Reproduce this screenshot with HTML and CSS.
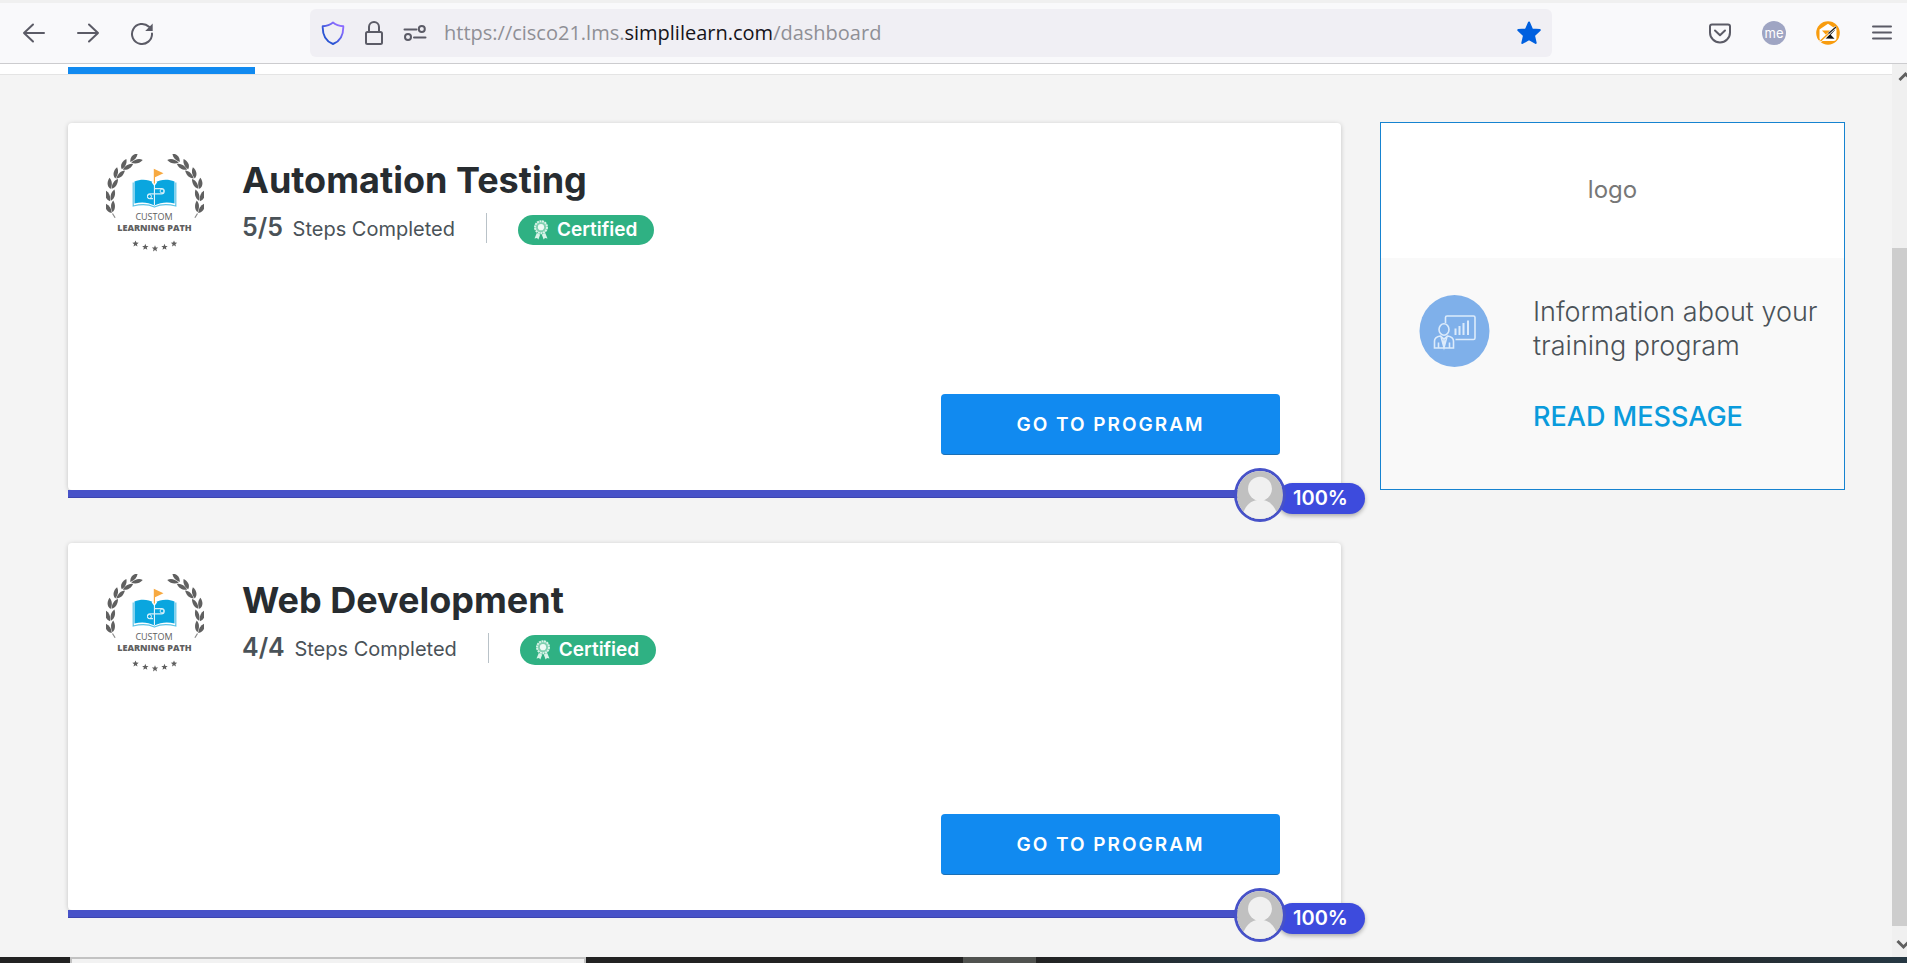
FILE: index.html
```html
<!DOCTYPE html>
<html lang="en">
<head>
<meta charset="utf-8">
<title>Dashboard</title>
<meta name="viewport" content="width=device-width, initial-scale=1">
<link rel="stylesheet" href="styles.css">
</head>
<body>
<svg class="defs" width="0" height="0" aria-hidden="true">
  <defs>
    <g id="leaf">
      <path d="M-.4 5.800C-5.200 3.800-5.600-1-4-5-.8-2.600.6 1 -.4 5.800Z"/>
      <path d="M.5 5.300C-.4.4 1-3.800 4.400-5.800 5.600-1.400 4.400 3.200 .5 5.300Z"/>
    </g>
    <g id="branch">
      <use href="#leaf" transform="translate(29.500 5.300) rotate(58)"/>
      <use href="#leaf" transform="translate(20 11.300) rotate(42)"/>
      <use href="#leaf" transform="translate(12.300 19.500) rotate(28)"/>
      <use href="#leaf" transform="translate(6.300 29.500) rotate(14)"/>
      <use href="#leaf" transform="translate(4.300 41.500) rotate(-2)"/>
      <use href="#leaf" transform="translate(4.600 53.300) rotate(-16)"/>
      <path d="M6.500 59.500l2.600 4.200" stroke="#8a8a8a" stroke-width="1.200"/>
    </g>
    <path id="star" d="M0-3.300L.9-1.100 3.200-1 1.400.5 2 2.800 0 1.500-2 2.800-1.400.5-3.200-1-.9-1.100Z"/>
    <symbol id="path-badge" viewBox="0 0 98 98">
      <g fill="#606060">
        <use href="#branch"/>
        <use href="#branch" transform="translate(98 0) scale(-1 1)"/>
        <use href="#star" x="29.500" y="89.700"/>
        <use href="#star" x="39.300" y="93"/>
        <use href="#star" x="49" y="94.600"/>
        <use href="#star" x="58.500" y="93"/>
        <use href="#star" x="68" y="89.700"/>
      </g>
      <path d="M28.500 27.500C35 24.700 42 25 48.400 28.800 55 25 62 24.700 68.500 27.500V49.500C62 47.700 55 48 48.400 51.500 42 48 35 47.700 28.500 49.500Z" fill="#0aa6df"/>
      <path d="M27.200 28.500V52C35 50 42 50 48.400 53 55 50 62 50 69.800 52V28.500" fill="none" stroke="#5cc4e8" stroke-width="1.200"/>
      <path d="M48.400 29V51" stroke="#fff" stroke-width="1"/>
      <path d="M48.400 34.600H55.500A2 2 0 0 1 55.500 39.800H44A2.300 2.300 0 0 0 44 44.600H47" fill="none" stroke="#d5f0fa" stroke-width="1.300"/>
      <circle cx="56" cy="37" r="1.900" fill="#0aa6df" stroke="#fff" stroke-width=".8"/>
      <circle cx="43.500" cy="42.500" r="2" fill="#0aa6df" stroke="#fff" stroke-width=".8"/>
      <path d="M45.700 28.500l2.700 3.500 2.700-3.500-1.200-1.200h-3Z" fill="#fff"/>
      <path d="M47.800 14.800L57.500 19.300 49 23.200V29.500H47.800Z" fill="#f7a940"/>
      <text class="badge-text" x="48" y="65.500" text-anchor="middle">CUSTOM</text>
      <text class="badge-text badge-text--bold" x="48.500" y="76.700" text-anchor="middle">LEARNING PATH</text>
    </symbol>
    <symbol id="ribbon" viewBox="0 0 16 20">
      <path d="M3.800 13L1.500 18.600 4 18 5.400 19.600 7.200 14.600ZM12.200 13L14.500 18.600 12 18 10.600 19.600 8.800 14.600Z" fill="#d8f3e8"/>
      <circle cx="8" cy="7.200" r="6" fill="#7fd0b0" stroke="#d8f3e8" stroke-width="2" stroke-dasharray="2 .6"/>
      <circle cx="8" cy="7.200" r="3.100" fill="#eefaf5"/>
    </symbol>
    <symbol id="person" viewBox="0 0 48 50">
      <path fill="#c0c0c0" d="M0 0H48V50H0Z"/>
      <circle cx="24" cy="18.500" r="12.500" fill="#f0f0f0"/>
      <path d="M5 50C7 37 14 30 24 30S41 37 43 50Z" fill="#f0f0f0"/>
    </symbol>
  </defs>
</svg>

<header class="toolbar">
  <div class="toolbar__group">
    <button class="icon-button" aria-label="Back"><svg viewBox="0 0 24 24"><path d="M22 12H2M11 3.500L2 12l9 8.500" class="line"/></svg></button>
    <button class="icon-button" aria-label="Forward"><svg viewBox="0 0 24 24"><path d="M2 12H22M13 3.500L22 12l-9 8.500" class="line"/></svg></button>
    <button class="icon-button" aria-label="Reload"><svg viewBox="0 0 24 24"><path d="M22 12.500A10 10 0 1 1 19 5.800" class="line"/><path d="M22.700 2.500V10H15.200Z" fill="#5b5b66"/></svg></button>
  </div>
  <div class="address">
    <button class="icon-button" aria-label="Tracking protection"><svg viewBox="0 0 24 24"><defs><linearGradient id="shield" x1="0" y1="1" x2="1" y2="0"><stop offset=".3" stop-color="#2b55d3"/><stop offset=".8" stop-color="#8a6cff"/></linearGradient></defs><path d="M12 1.500C15 4 18.500 5 22.300 5.300 22.500 13 20 20 12 23 4 20 1.500 13 1.700 5.300 5.500 5 9 4 12 1.500Z" fill="none" stroke="url(#shield)" stroke-width="1.900" stroke-linejoin="round"/></svg></button>
    <button class="icon-button" aria-label="Site security"><svg viewBox="0 0 24 24"><path d="M4 12.500q0-1.500 1.500-1.500h13q1.500 0 1.500 1.500v9q0 1.500-1.500 1.500h-13q-1.500 0-1.500-1.500ZM7 11V6a5 5 0 0 1 10 0v5" class="line"/></svg></button>
    <button class="icon-button" aria-label="Site permissions"><svg viewBox="0 0 24 24"><path d="M1.500 8.500H13.500M11 16.500H22.500" class="line"/><circle cx="18.800" cy="8" r="3" class="line"/><circle cx="5" cy="16" r="3" class="line"/></svg></button>
    <div class="address__url" role="textbox" aria-label="Address">https://cisco21.lms.<span class="address__domain">simplilearn.com</span>/dashboard</div>
    <button class="icon-button" aria-label="Bookmark this page"><svg viewBox="0 0 24 24"><path d="M12 1.500L15 8.400 22.800 9.100 17 14.500 18.700 22 12 18.200 5.300 22 7 14.500 1.200 9.100 9 8.400Z" fill="#0060df" stroke="#0060df" stroke-width="2" stroke-linejoin="round"/></svg></button>
  </div>
  <div class="toolbar__group">
    <button class="icon-button" aria-label="Save to Pocket"><svg viewBox="0 0 24 24"><path d="M4 3.500H20q2 0 2 2V11.500A10 10 0 0 1 2 11.500V5.500q0-2 2-2ZM7 9.500l5 4.700 5-4.700" class="line"/></svg></button>
    <button class="icon-button account" aria-label="Account">me</button>
    <button class="icon-button" aria-label="Extension"><svg viewBox="0 0 24 24"><circle cx="12" cy="12" r="11.800" fill="#f89c0e"/><path d="M12 2.800L20.500 8.500V17q0 3-3 3H6.500q-3 0-3-3V8.500Z" fill="#fff"/><path d="M6 9.500h7.500l2 1.500-4 4.500Z" fill="#f89c0e"/><path d="M9.500 17.500l4.500-4.500 4.500 4.800ZM13.500 12.500l5-4.500.5 1-4.500 5Z" fill="#111"/><path d="M4 20.500L20 6" stroke="#fff" stroke-width="2.500"/><path d="M4.500 20L12.500 12.500" stroke="#f89c0e" stroke-width="1.500"/><path d="M12.500 12.500L20 6" stroke="#222" stroke-width="1.300"/></svg></button>
    <button class="icon-button" aria-label="Open menu"><svg viewBox="0 0 24 24"><path d="M3 5.500H21M3 11.500H21M3 17.500H21" class="line"/></svg></button>
  </div>
</header>

<div class="viewport">
  <div class="page">
    <nav class="tabs" aria-label="Sections"><span class="tabs__active"></span></nav>
    <div class="layout">
      <main class="programs">
        <article class="program">
          <div class="program__card">
            <div class="program__head">
              <svg class="program__badge" role="img" aria-label="Custom learning path"><use href="#path-badge"/></svg>
              <div class="program__info">
                <h2 class="program__title">Automation Testing</h2>
                <div class="program__meta">
                  <p class="steps"><strong class="steps__count">5/5</strong> Steps Completed</p>
                  <span class="certified"><svg class="certified__icon" aria-hidden="true"><use href="#ribbon"/></svg>Certified</span>
                </div>
              </div>
            </div>
            <button class="program__go">GO TO PROGRAM</button>
          </div>
          <div class="progress" role="progressbar" aria-label="Automation Testing progress" aria-valuenow="100">
            <div class="progress__marker">
              <svg class="progress__avatar" aria-hidden="true"><use href="#person"/></svg>
              <span class="progress__value">100%</span>
            </div>
          </div>
        </article>
        <article class="program">
          <div class="program__card">
            <div class="program__head">
              <svg class="program__badge" role="img" aria-label="Custom learning path"><use href="#path-badge"/></svg>
              <div class="program__info">
                <h2 class="program__title">Web Development</h2>
                <div class="program__meta">
                  <p class="steps"><strong class="steps__count">4/4</strong> Steps Completed</p>
                  <span class="certified"><svg class="certified__icon" aria-hidden="true"><use href="#ribbon"/></svg>Certified</span>
                </div>
              </div>
            </div>
            <button class="program__go">GO TO PROGRAM</button>
          </div>
          <div class="progress" role="progressbar" aria-label="Web Development progress" aria-valuenow="100">
            <div class="progress__marker">
              <svg class="progress__avatar" aria-hidden="true"><use href="#person"/></svg>
              <span class="progress__value">100%</span>
            </div>
          </div>
        </article>
      </main>
      <aside class="notice">
        <div class="notice__logo">logo</div>
        <div class="notice__body">
          <svg class="notice__icon" viewBox="0 0 70 72" aria-hidden="true">
            <ellipse cx="35" cy="36" rx="35" ry="36" fill="#7fb0ea"/>
            <g fill="none" stroke="#dcebfb" stroke-width="1.600">
              <path d="M26 28V22.500q0-1.500 1.500-1.500H54q1.500 0 1.500 1.500V43q0 1.500-1.500 1.500H36"/>
              <path d="M36 40V33.500M40 40V31M44 40V28M48.500 40V25.500" stroke-width="2"/>
              <ellipse cx="24.500" cy="34.500" rx="5" ry="5.800"/>
              <path d="M15 53V46q0-4 6-5l3.500 3 3.500-3q6 1 6 5v7ZM19 53V47.500M30 53V47.500M21.500 41.500l3 11 3-11M24.500 44v8"/>
            </g>
          </svg>
          <div class="notice__text">
            <p class="notice__message">Information about your training program</p>
            <a class="notice__link" href="#">READ MESSAGE</a>
          </div>
        </div>
      </aside>
    </div>
  </div>
  <div class="scrollbar" aria-hidden="true">
    <svg class="scrollbar__arrow" viewBox="0 0 15 31"><path d="M7.500 16L13.500 10 19.500 16" fill="none" stroke="#606060" stroke-width="3"/></svg>
    <div class="scrollbar__track"><div class="scrollbar__thumb"></div></div>
    <svg class="scrollbar__arrow" viewBox="0 0 15 31"><path d="M5.500 15L11.500 21 17.500 15" fill="none" stroke="#606060" stroke-width="3"/></svg>
  </div>
</div>

<footer class="taskbar">
  <div class="taskbar__search"></div>
  <div class="taskbar__apps"></div>
  <div class="taskbar__current"></div>
  <div class="taskbar__rest"></div>
</footer>
</body>
</html>
```

FILE: styles.css
```css
* {
  box-sizing: border-box;
}

body {
  margin: 0;
  min-height: 100vh;
  display: flex;
  flex-direction: column;
  background: #f4f4f4;
  color: #4a5258;
  font-family: Inter, "Liberation Sans", sans-serif;
  overflow-x: hidden;
}

h2,
p {
  margin: 0;
}

button {
  border: 0;
  padding: 0;
  background: none;
  font-family: inherit;
  cursor: pointer;
}

.defs {
  position: absolute;
}

/* Browser toolbar */
.toolbar {
  display: flex;
  align-items: center;
  gap: 156px;
  padding: 6px 13px 6px 22px;
  border-top: 3px solid #f0f0f0;
  border-bottom: 1px solid #cccccf;
  background: #f9f9fb;
}

.toolbar__group {
  display: flex;
  gap: 30px;
}

.icon-button {
  flex: none;
  width: 24px;
  height: 24px;
}

.icon-button svg {
  display: block;
  width: 24px;
  height: 24px;
}

.line {
  fill: none;
  stroke: #5b5b66;
  stroke-width: 2;
  stroke-linecap: round;
  stroke-linejoin: round;
}

.address {
  flex: 1;
  min-width: 0;
  display: flex;
  align-items: center;
  gap: 17px;
  height: 48px;
  padding: 0 11px;
  border-radius: 6px;
  background: #f0eff4;
}

.address__url {
  flex: 1;
  min-width: 0;
  overflow: hidden;
  white-space: nowrap;
  color: #8f8f96;
  font: 20px/32px "Open Sans", "Noto Sans", sans-serif;
}

.address__domain {
  color: #15141a;
}

.account {
  border-radius: 50%;
  background: #9fa5c3;
  color: #fff;
  font-size: 13px;
  line-height: 22px;
}

/* Page */
.viewport {
  flex: 1;
  display: flex;
}

.page {
  flex: 1;
  min-width: 0;
}

.tabs {
  padding: 3px 68px 0;
  border-bottom: 1px solid #e4e4e4;
  background: #fff;
}

.tabs__active {
  display: block;
  width: 187px;
  height: 7px;
  background: #118af0;
}

.layout {
  display: grid;
  grid-template-columns: minmax(0, 1fr) 465px;
  align-items: start;
  gap: 39px;
  padding: 48px 47px 39px 68px;
}

.programs {
  display: grid;
  gap: 45px;
}

.program__card {
  display: flex;
  flex-direction: column;
  gap: 142px;
  padding: 31px 61px 35px 38px;
  border-radius: 4px;
  background: #fff;
  box-shadow: 0 1px 5px rgba(0, 0, 0, 0.2);
}

.program__head {
  display: flex;
  gap: 38px;
}

.program__badge {
  flex: none;
  width: 98px;
  height: 98px;
}

.badge-text {
  font: 9px "Open Sans", sans-serif;
  fill: #606060;
}

.badge-text--bold {
  font-weight: 800;
}

.program__info {
  padding-top: 4px;
}

.program__title {
  color: #272c30;
  font-size: 36px;
  font-weight: 700;
  line-height: 44px;
}

.program__meta {
  display: flex;
  align-items: center;
  gap: 31px;
  margin-top: 9px;
}

.steps {
  padding-right: 31px;
  border-right: 1px solid #b9c2c8;
  font-size: 20px;
  line-height: 28px;
}

.steps__count {
  margin-right: 4px;
  font-size: 25px;
  font-weight: 600;
}

.certified {
  display: flex;
  align-items: center;
  gap: 8px;
  margin-top: 4px;
  padding: 0 17px 0 15px;
  border-radius: 15px;
  background: #2fb183;
  color: #fff;
  font-size: 19px;
  font-weight: 600;
  line-height: 30px;
}

.certified__icon {
  width: 16px;
  height: 20px;
}

.program__go {
  align-self: flex-end;
  width: 339px;
  height: 61px;
  border-bottom: 1px solid #1b6fb5;
  border-radius: 4px;
  background: #118af0;
  color: #fff;
  font-size: 19px;
  font-weight: 600;
  letter-spacing: 2px;
}

.progress {
  position: relative;
  height: 8px;
  margin-right: 81px;
  border-bottom: 1px solid #3c44b0;
  background: #4752c8;
}

/* Marker sits over the end of the bar and the card edge */
.progress__marker {
  position: absolute;
  top: -22px;
  right: -105px;
  display: flex;
  align-items: center;
}

.progress__avatar {
  z-index: 1;
  width: 52px;
  height: 54px;
  border: 3px solid #4752c8;
  border-radius: 50%;
}

.progress__value {
  margin: 7px 0 0 -9px;
  padding: 0 16px;
  width: 88px;
  border-radius: 16px;
  background: #3d4bdd;
  box-shadow: 0 2px 4px rgba(0, 0, 0, 0.3);
  color: #fff;
  font-size: 20px;
  font-weight: 600;
  line-height: 31px;
}

/* Training notice */
.notice {
  margin-top: -1px;
  border: 1px solid #1683d0;
  background: #f9f9f9;
}

.notice__logo {
  padding: 50px 0 51px;
  background: #fff;
  color: #777;
  font-size: 24px;
  line-height: 34px;
  text-align: center;
}

.notice__body {
  display: flex;
  gap: 43px;
  padding: 37px 0 55px 38px;
}

.notice__icon {
  flex: none;
  width: 71px;
  height: 72px;
}

.notice__text {
  flex: 1;
  font-size: 27px;
  line-height: 34px;
}

.notice__message {
  margin-bottom: 37px;
  font-weight: 300;
}

.notice__link {
  color: #0a9bdc;
  font-weight: 500;
  text-decoration: none;
}

/* Scrollbar */
.scrollbar {
  display: flex;
  flex-direction: column;
  width: 15px;
  background: #f0f0f0;
}

.scrollbar__arrow {
  width: 15px;
  height: 31px;
  overflow: hidden;
}

.scrollbar__track {
  flex: 1;
  display: flex;
  flex-direction: column;
  justify-content: flex-end;
}

.scrollbar__thumb {
  flex: 0 0 678px;
  background: #cdcdcd;
}

/* Taskbar edge */
.taskbar {
  display: flex;
  height: 6px;
  padding-left: 70px;
  background: #222;
}

.taskbar__search {
  width: 516px;
  border: 2px solid #c2c2c2;
  border-bottom: 0;
  background: #f2f2f2;
}

.taskbar__apps {
  width: 377px;
}

.taskbar__current {
  width: 73px;
  background: #50524f;
}

.taskbar__rest {
  flex: 1;
  background: linear-gradient(90deg, #222, #263640 25%, #252525 35%, #263843 55%, #252a2d 75%, #263843);
}
```
